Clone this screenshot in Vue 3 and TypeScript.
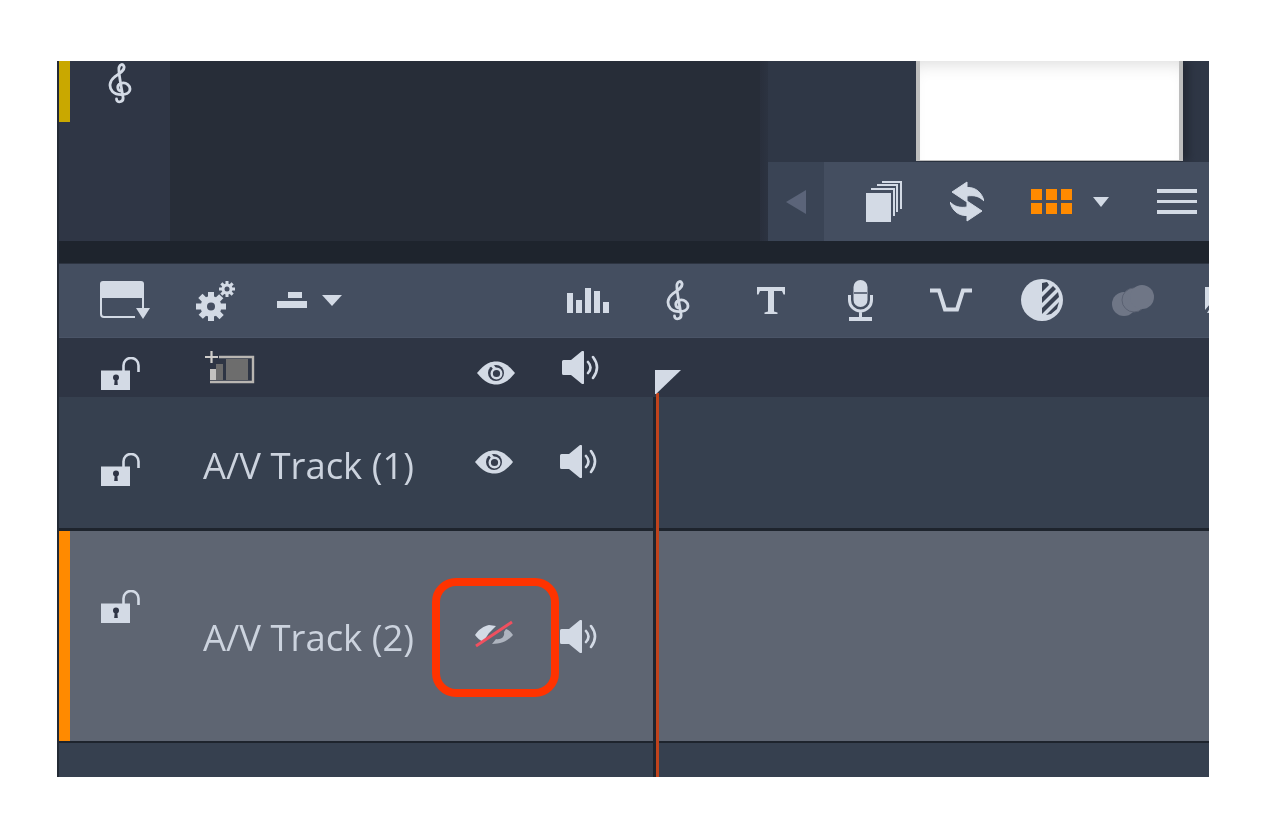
<script setup lang="ts">
const gridCells = [0, 1, 2, 3, 4, 5]
const bars = [
  { x: 0, y: 5, h: 20 },
  { x: 9, y: 12, h: 13 },
  { x: 18, y: 0, h: 25 },
  { x: 27, y: 3, h: 22 },
  { x: 36, y: 14, h: 11 },
]
</script>

<template>
  <div class="frame">
    <svg class="sprite" width="0" height="0" aria-hidden="true">
      <symbol id="lock" viewBox="0 0 39 34">
        <path d="M0 13.500h29V33H0z" fill="#d3dae5" />
        <path d="M22.500 14V8.500a7.500 7.500 0 0 1 15 0V15" fill="none" stroke="#d3dae5" stroke-width="2.600" />
        <circle cx="15" cy="20.500" r="3" fill="#2f3546" />
        <path d="M13.800 21h2.400l.6 7h-3.600z" fill="#2f3546" />
      </symbol>
      <symbol id="eye" viewBox="0 0 38 24">
        <path d="M0 12C8 2 14 .5 19 .5S30 2 38 12c-8 10-14 11.500-19 11.500S8 22 0 12z" fill="#d3dae5" />
        <circle cx="19" cy="12" r="8" fill="#353c4d" />
        <circle cx="19.500" cy="12.500" r="4.800" fill="none" stroke="#d3dae5" stroke-width="2.400" />
        <path d="M13 2l5 6" stroke="#d3dae5" stroke-width="3" />
      </symbol>
      <symbol id="speaker" viewBox="0 0 38 33">
        <path d="M0 10.500Q0 9 1.500 9H9L20 0q2-.5 2 1v31q0 1.500-2 1L9 24H1.500Q0 24 0 22.500z" fill="#d3dae5" />
        <path d="M26 11q5 5.500 0 11M31 6q8 10.500 0 21" fill="none" stroke="#d3dae5" stroke-width="2.600" stroke-linecap="round" />
      </symbol>
      <symbol id="clef" viewBox="0 0 25 41">
        <path d="M13.500 28C9 28 8.500 22 12.500 20.500C18 18.500 23.500 23 21.500 28C19.500 32.500 9 33 4.500 28.500C.5 24 1.500 18 6.500 14C12 10 17 7 16 3.500C15 .5 12 1 11 4.500C10 8 13 22 15 34C16 39.500 8.500 40.500 8.500 36" fill="none" stroke="#d3dae5" stroke-width="2.800" stroke-linecap="round" />
      </symbol>
    </svg>

    <section class="top">
      <div class="clef-col">
        <div class="yellow"></div>
        <svg class="clef-top" width="25" height="41"><use href="#clef" /></svg>
      </div>
      <div class="dark-main"></div>
      <div class="strip"></div>
      <div class="library">
        <div class="thumb-area"><div class="thumb"></div></div>
        <div class="lib-bar">
          <div class="back">
            <svg width="20" height="24" viewBox="0 0 20 24"><path d="M20 0v24L0 12z" fill="#5b6479" /></svg>
          </div>
          <svg class="pages" width="36" height="41" viewBox="0 0 36 41">
            <path d="M0 12h25v29H0z" fill="#d3dae5" />
            <path d="M5 9V7h24v28h-2V9zM11 5V3h21v28h-2V5zM16 2V0h20v28h-2V2z" fill="#d3dae5" />
          </svg>
          <svg class="sync" width="34" height="41" viewBox="0 0 34 41">
            <path d="M2 11L17 1v5.500C26 6 32 12 34 20C29 15 24 14 17 15v6z" fill="#d3dae5" stroke="#d3dae5" stroke-linejoin="round" />
            <path d="M2 11L17 1v5.500C26 6 32 12 34 20C29 15 24 14 17 15v6z" fill="#d3dae5" stroke="#d3dae5" stroke-linejoin="round" transform="rotate(180 17 20.500)" />
          </svg>
          <div class="orange-grid">
            <span v-for="cell in gridCells" :key="cell"></span>
          </div>
          <svg class="lib-caret" width="16" height="10" viewBox="0 0 16 10"><path d="M0 0h16L8 10z" fill="#d3dae5" /></svg>
          <div class="burger"><span></span><span></span><span></span></div>
        </div>
      </div>
    </section>

    <div class="band"></div>

    <section class="toolbar">
      <svg class="t-panel" width="50" height="39" viewBox="0 0 50 39">
        <path d="M3 0h38q3 0 3 3v14H0V3q0-3 3-3z" fill="#d3dae5" />
        <path d="M1 17v16q0 3 3 3h31M43 17v10" fill="none" stroke="#d3dae5" stroke-width="2" />
        <path d="M36 27h14l-7 11z" fill="#d3dae5" />
      </svg>
      <svg class="t-gears" width="39" height="40" viewBox="0 0 39 40">
        <g fill="#d3dae5">
          <circle cx="15" cy="25.500" r="10.500" />
          <path d="M12 11h6v6h-6zM12 34h6v6h-6zM0 22.500h6v6H0zM24 22.500h6v6h-6z" />
          <path d="M12 11h6v6h-6zM12 34h6v6h-6zM0 22.500h6v6H0zM24 22.500h6v6h-6z" transform="rotate(45 15 25.500)" />
          <circle cx="31" cy="8" r="5.500" />
          <path d="M29.500 0h3v4h-3zM29.500 12h3v4h-3zM23 6.500h4v3h-4zM35 6.500h4v3h-4z" />
          <path d="M29.500 0h3v4h-3zM29.500 12h3v4h-3zM23 6.500h4v3h-4zM35 6.500h4v3h-4z" transform="rotate(45 31 8)" />
        </g>
        <circle cx="15" cy="25.500" r="4" fill="#454e61" />
        <circle cx="31" cy="8" r="2.500" fill="#454e61" />
      </svg>
      <svg class="t-stack" width="30" height="16" viewBox="0 0 30 16">
        <path d="M11 0h14v6H11zM0 9h30v7H0z" fill="#d3dae5" />
      </svg>
      <svg class="t-caret" width="20" height="11" viewBox="0 0 20 11"><path d="M0 0h20L10 11z" fill="#d3dae5" /></svg>
      <svg class="t-bars" width="42" height="25" viewBox="0 0 42 25">
        <rect v-for="bar in bars" :key="bar.x" :x="bar.x" :y="bar.y" width="6" :height="bar.h" fill="#d3dae5" />
      </svg>
      <svg class="t-clef" width="25" height="41"><use href="#clef" /></svg>
      <svg class="t-text" width="28" height="27" viewBox="0 0 28 27">
        <path d="M0 0h28v7.500h-1.500L25 4h-8v20.500l3.500 1V27h-13v-1.500l3.500-1V4H3L1.500 7.500H0z" fill="#d3dae5" />
      </svg>
      <svg class="t-mic" width="25" height="41" viewBox="0 0 25 41">
        <rect x="5.500" y="0" width="14" height="27" rx="7" fill="#d3dae5" />
        <path d="M6 13h13" stroke="#454e61" stroke-width="1.500" />
        <path d="M1.500 15v5a11 11 0 0 0 22 0v-5M12.500 31v6" fill="none" stroke="#d3dae5" stroke-width="3" />
        <path d="M1 37h23v4H1z" fill="#d3dae5" />
      </svg>
      <svg class="t-trans" width="42" height="24" viewBox="0 0 42 24">
        <path d="M0 2.500h9l6 19h12l6-19h9" fill="none" stroke="#d3dae5" stroke-width="4" />
      </svg>
      <svg class="t-disc" width="42" height="42" viewBox="0 0 42 42">
        <circle cx="21" cy="21" r="21" fill="#d3dae5" />
        <path d="M21 4l5-1 2 3-7 7zM21 18l11-11 3 3-14 14zM21 29l16-16 1 5-17 17zM25 36l13-13-2 7-6 5z" fill="#3a4253" />
      </svg>
      <svg class="t-dim" width="42" height="31" viewBox="0 0 42 31">
        <circle cx="12" cy="19" r="12" fill="#6f7686" />
        <circle cx="22" cy="15" r="12" fill="#6f7686" stroke="#5a6172" stroke-width="1" />
        <circle cx="30" cy="12" r="12" fill="#6f7686" />
      </svg>
      <svg class="t-cut" width="5" height="27" viewBox="0 0 5 27">
        <path d="M0 0h5v17l-5 6zM2 26l3-5v5z" fill="#d3dae5" />
      </svg>
    </section>

    <section class="lanes">
      <div class="lane lane-head">
        <div class="head-cells">
          <svg class="lock lock-h" width="39" height="34"><use href="#lock" /></svg>
          <svg class="add-track" width="50" height="33" viewBox="0 0 50 33">
            <path d="M0 6h13M6.500 0v12" stroke="#cfcdca" stroke-width="2.200" />
            <path d="M5 18h6v11H5z" fill="#c4c2bf" />
            <path d="M11 13h7v16h-7z" fill="#6b6b6b" />
            <path d="M21 8h22v21H21z" fill="#6d6d6d" />
            <path d="M14 6h34v25H5" fill="none" stroke="#b9b6b2" stroke-width="2.400" />
          </svg>
          <svg class="eye eye-h" width="38" height="24"><use href="#eye" /></svg>
          <svg class="spk spk-h" width="38" height="33"><use href="#speaker" /></svg>
        </div>
      </div>

      <div class="lane lane-one">
        <div class="head-cells">
          <svg class="lock lock-1" width="39" height="34"><use href="#lock" /></svg>
          <div class="label label-1">A/V Track (1)</div>
          <svg class="eye eye-1" width="38" height="24"><use href="#eye" /></svg>
          <svg class="spk spk-1" width="38" height="33"><use href="#speaker" /></svg>
        </div>
        <div class="lane-body"></div>
      </div>

      <div class="lane lane-two">
        <div class="orange"></div>
        <div class="head-cells">
          <svg class="lock lock-2" width="39" height="34"><use href="#lock" /></svg>
          <div class="label label-2">A/V Track (2)</div>
          <svg class="eye eye-2" width="38" height="28" viewBox="0 0 38 28">
            <path d="M0 15C4 9 9 6 14 5l7 1-7 7-6 9C5 20 2 18 0 15z" fill="#d3dae5" />
            <path d="M17 24c8 0 15-2 21-9-2-3-4-5-7-6l-2 3c1 5-3 8-8 7z" fill="#aeb4bf" />
            <path d="M1 26L37 2" stroke="#f0505f" stroke-width="3" />
          </svg>
          <svg class="spk spk-2" width="38" height="33"><use href="#speaker" /></svg>
        </div>
        <div class="lane-body"></div>
        <div class="callout"></div>
      </div>

      <div class="lane lane-rest">
        <div class="head-cells"></div>
        <div class="lane-body"></div>
      </div>

      <div class="playhead">
        <svg class="flag" width="26" height="24" viewBox="0 0 26 24"><path d="M0 0h26L1 24H0z" fill="#d3dae5" /></svg>
      </div>
    </section>
  </div>
</template>

<style>
html,
body {
  background: #fff;
}
</style>

<style scoped>
.frame {
  width: 1150px;
  height: 716px;
  margin: 61px 0 0 57px;
  border-left: 2px solid #232a35;
  display: flex;
  flex-direction: column;
  overflow: hidden;
  font-family: "Open Sans", "Noto Sans", sans-serif;
  filter: blur(0.5px);
}
.sprite {
  position: absolute;
}
svg {
  display: block;
  flex: none;
}

/* top part */
.top {
  height: 180px;
  display: flex;
  background: #272d38;
}
.clef-col {
  position: relative;
  width: 111px;
  background: #2f3645;
  display: flex;
  justify-content: center;
}
.yellow {
  position: absolute;
  left: 0;
  top: 0;
  width: 11px;
  height: 61px;
  background: #c9a800;
}
.clef-top {
  margin: 2px 0 0 11px;
}
.dark-main {
  width: 590px;
}
.strip {
  width: 8px;
  background: linear-gradient(90deg, #292f3c, #2c3341);
}
.library {
  flex: 1;
  display: flex;
  flex-direction: column;
  background: #2f3746;
}
.thumb-area {
  height: 101px;
  padding-left: 148px;
}
.thumb {
  width: 267px;
  height: 100px;
  box-sizing: border-box;
  background: #fff;
  border: solid #bdbdbd;
  border-width: 0 4px 1px;
  box-shadow: 6px 0 8px #242a36, inset 0 14px 18px -12px #d8d8d8;
}
.lib-bar {
  flex: 1;
  display: flex;
  align-items: center;
  background: #444e60;
}
.back {
  width: 56px;
  height: 100%;
  background: #3a4455;
  display: flex;
  align-items: center;
  justify-content: center;
}
.pages {
  margin-left: 42px;
}
.sync {
  margin-left: 48px;
}
.orange-grid {
  margin-left: 47px;
  display: grid;
  grid-template-columns: repeat(3, 11px);
  grid-auto-rows: 11px;
  gap: 3px 4px;
}
.orange-grid span {
  background: #ff8a00;
}
.lib-caret {
  margin-left: 21px;
}
.burger {
  margin-left: 48px;
  width: 40px;
  display: flex;
  flex-direction: column;
  gap: 7px;
}
.burger span {
  height: 3.500px;
  background: #d3dae5;
}

.band {
  height: 23px;
  flex: none;
  background: #1e242d;
  border-bottom: 1px solid #2d3441;
  box-sizing: border-box;
}

/* main toolbar */
.toolbar {
  height: 74px;
  flex: none;
  display: flex;
  align-items: flex-start;
  background: #444e60;
  border-bottom: 1px solid #4a5467;
  box-sizing: border-box;
}
.t-panel {
  margin: 17px 0 0 41px;
}
.t-gears {
  margin: 17px 0 0 46px;
}
.t-stack {
  margin: 28px 0 0 42px;
}
.t-caret {
  margin: 31px 0 0 15px;
}
.t-bars {
  margin: 24px 0 0 225px;
}
.t-clef {
  margin: 16px 0 0 57px;
}
.t-text {
  margin: 23px 0 0 66px;
}
.t-mic {
  margin: 16px 0 0 63px;
}
.t-trans {
  margin: 24px 0 0 57px;
}
.t-disc {
  margin: 15px 0 0 49px;
}
.t-dim {
  margin: 21px 0 0 49px;
}
.t-cut {
  margin: 23px 0 0 51px;
}

/* tracks */
.lanes {
  position: relative;
  flex: 1;
  display: flex;
  flex-direction: column;
  background: #36404f;
}
.lane {
  position: relative;
  display: flex;
  flex: none;
}
.head-cells {
  width: 594px;
  flex: none;
  display: flex;
  align-items: flex-start;
  box-sizing: border-box;
  padding-left: 42px;
}
.lane-body {
  flex: 1;
  border-left: 3px solid #1e242d;
}
.lane-head {
  height: 59px;
  background: #2e3544;
}
.lane-one {
  height: 134px;
  background: #36404f;
  border-bottom: 3px solid #1e242d;
  box-sizing: border-box;
}
.lane-two {
  height: 212px;
  background: #5e6572;
  border-bottom: 2px solid #1e242d;
  box-sizing: border-box;
}
.lane-rest {
  flex: 1;
}
.orange {
  position: absolute;
  left: 0;
  top: 0;
  bottom: 0;
  width: 11px;
  background: #ff8a00;
}
.label {
  width: 272px;
  margin-left: 63px;
  font-size: 36.400px;
  line-height: 46px;
  color: #ccd3de;
  white-space: nowrap;
}
.lock-h {
  margin-top: 19px;
}
.add-track {
  margin: 13px 0 0 65px;
}
.eye-h {
  margin: 23px 0 0 222px;
}
.spk-h {
  margin: 13px 0 0 47px;
}
.lock-1 {
  margin-top: 56px;
}
.label-1 {
  margin-top: 45px;
}
.eye-1 {
  margin: 53px 0 0 0;
}
.spk-1 {
  margin: 48px 0 0 47px;
}
.lock-2 {
  margin-top: 59px;
}
.label-2 {
  margin-top: 83px;
}
.eye-2 {
  margin: 89px 0 0 0;
}
.spk-2 {
  margin: 89px 0 0 47px;
}
.callout {
  position: absolute;
  left: 373px;
  top: 47px;
  width: 127px;
  height: 119px;
  box-sizing: border-box;
  border: 8px solid #ff3300;
  border-radius: 24px;
}
.playhead {
  position: absolute;
  left: 597px;
  top: 55px;
  bottom: 0;
  width: 3px;
  background: #c0431c;
}
.flag {
  position: absolute;
  left: -1px;
  top: -23px;
}
</style>
